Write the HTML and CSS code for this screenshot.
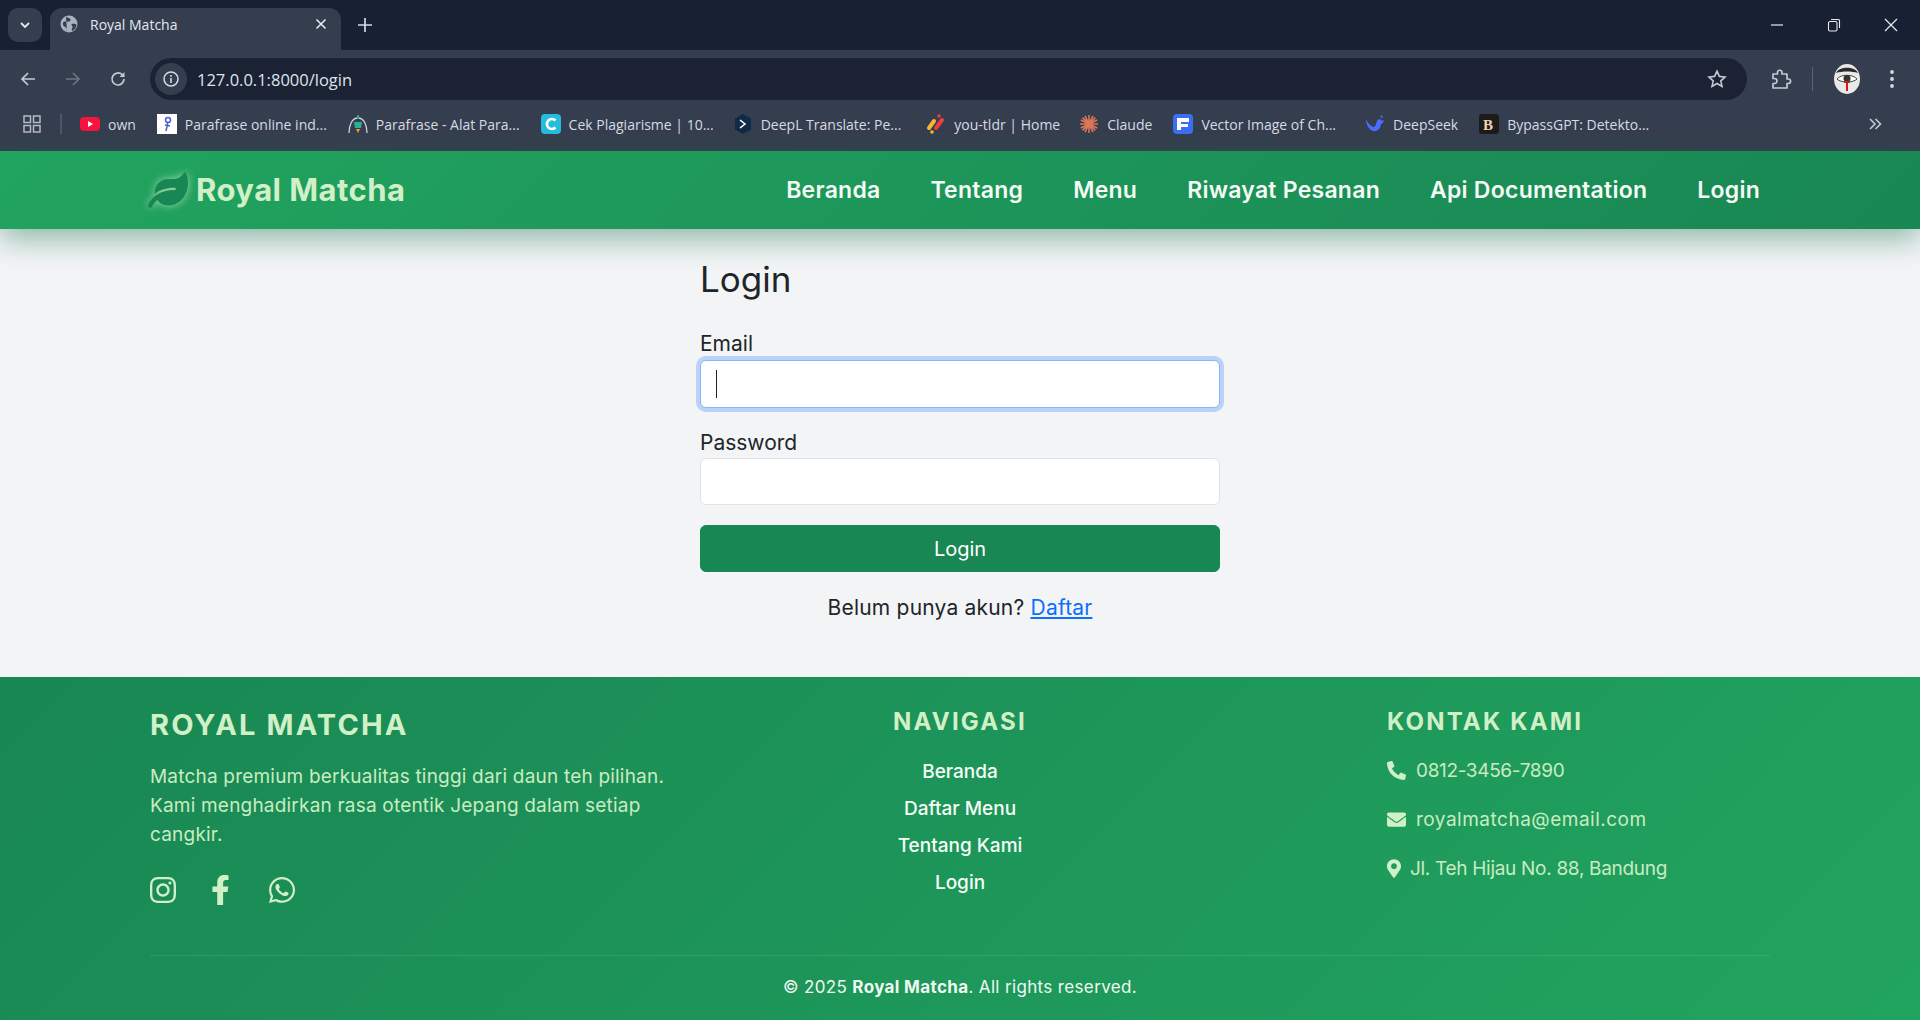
FILE: index.html
```html
<!DOCTYPE html>
<html lang="id">
<head>
  <meta charset="UTF-8">
  <title>Royal Matcha</title>
  <link rel="stylesheet" href="styles.css">
</head>
<body>
  <!-- browser chrome -->
  <div class="tabstrip">
    <div class="tab-menu">
      <svg width="14" height="14" viewBox="0 0 14 14"><path d="M3 5l4 4 4-4" fill="none" stroke="#e3e8ef" stroke-width="1.8"/></svg>
    </div>
    <div class="tab">
      <svg width="18" height="18" viewBox="0 0 18 18"><circle cx="9" cy="9" r="8.5" fill="#aab2bf"/><path d="M6 1.5c1.5 2 4 1 4.5 3S8 7 6 6.5 2.500 7 3 9.500s3 2 3.500 4 0 3 .5 3.500M12 9c2-.5 4 0 4.500 1-.5 3-2 5-4.500 6-1-2 1-3 .5-4.500S10.500 9.500 12 9z" fill="#353e4e"/></svg>
      <span class="tab-title">Royal Matcha</span>
      <svg class="tab-close" width="12" height="12" viewBox="0 0 12 12"><path d="M1.5 1.5l9 9M10.5 1.5l-9 9" stroke="#e3e8ef" stroke-width="1.6"/></svg>
    </div>
    <svg class="new-tab" width="14" height="14" viewBox="0 0 14 14"><path d="M7 0v14M0 7h14" stroke="#d5dbe5" stroke-width="1.7"/></svg>
    <div class="win-controls">
      <svg width="14" height="14" viewBox="0 0 14 14"><path d="M1 7h12" stroke="#e8ebf0" stroke-width="1.2"/></svg>
      <svg width="14" height="14" viewBox="0 0 14 14"><rect x="1.5" y="3.5" width="8.5" height="9.5" rx="1.5" fill="none" stroke="#e8ebf0" stroke-width="1.1"/><path d="M4 1.5h7.5a1 1 0 0 1 1 1V10" fill="none" stroke="#e8ebf0" stroke-width="1.1"/></svg>
      <svg width="14" height="14" viewBox="0 0 14 14"><path d="M1 1l12 12M13 1L1 13" stroke="#e8ebf0" stroke-width="1.2"/></svg>
    </div>
  </div>

  <div class="toolbar">
    <div class="tool-btns">
      <svg width="18" height="18" viewBox="0 0 18 18"><path d="M16 9H3M9 3L3 9l6 6" fill="none" stroke="#c3cad5" stroke-width="1.7"/></svg>
      <svg width="18" height="18" viewBox="0 0 18 18"><path d="M2 9h13M9 3l6 6-6 6" fill="none" stroke="#6d7582" stroke-width="1.7"/></svg>
      <svg width="18" height="18" viewBox="0 0 18 18"><path d="M15 9a6 6 0 1 1-1.800-4.300L15 6.500" fill="none" stroke="#c3cad5" stroke-width="1.7"/><path d="M15.500 2v5h-5z" fill="#c3cad5"/></svg>
    </div>
    <div class="omnibox">
      <span class="site-info">
        <svg width="18" height="18" viewBox="0 0 18 18"><circle cx="9" cy="9" r="7" fill="none" stroke="#d5dbe5" stroke-width="1.5"/><path d="M9 8v5M9 5v1.700" stroke="#d5dbe5" stroke-width="1.6"/></svg>
      </span>
      <span class="url">127.0.0.1:8000/login</span>
      <svg class="star" width="20" height="20" viewBox="0 0 20 20"><path d="M10 2.200l2.400 5.200 5.600.6-4.200 3.800 1.200 5.600-5-2.900-5 2.900 1.200-5.600L2 8l5.600-.6z" fill="none" stroke="#c3cad5" stroke-width="1.6"/></svg>
    </div>
    <div class="tool-right">
      <svg width="22" height="22" viewBox="0 0 22 22"><path d="M3 6h4.500V4.500a2.200 2.200 0 0 1 4.500 0V6h5v5h1.300a2.200 2.200 0 0 1 0 4.500H17V20H3v-4.500h1.500a2.500 2.500 0 0 0 0-5H3z" fill="none" stroke="#c3cad5" stroke-width="1.7" stroke-linejoin="round"/></svg>
      <span class="tool-sep"></span>
      <svg class="avatar" width="26" height="30" viewBox="0 0 26 30"><ellipse cx="13" cy="15" rx="13" ry="15" fill="#e9e9e9"/><path d="M2 9C5 2 21 2 24 9c-6-2-16-2-22 0z" fill="#2a2a2a"/><path d="M3 15c4-5 16-5 20 0-4 4-16 4-20 0z" fill="#fff" stroke="#444"/><circle cx="13" cy="14.500" r="3.500" fill="#333"/><path d="M13 17v10" stroke="#d81818" stroke-width="2"/><path d="M10 18.500h6" stroke="#d81818"/></svg>
      <svg class="dots" width="6" height="20" viewBox="0 0 6 20"><circle cx="3" cy="3" r="1.900" fill="#d5dbe5"/><circle cx="3" cy="10" r="1.900" fill="#d5dbe5"/><circle cx="3" cy="17" r="1.900" fill="#d5dbe5"/></svg>
    </div>
  </div>

  <div class="bookmarks">
    <svg class="apps" width="18" height="18" viewBox="0 0 18 18"><g fill="none" stroke="#b4bbc6" stroke-width="1.5"><rect x="1" y="1" width="6.5" height="6.5"/><rect x="10.5" y="1" width="6.5" height="6.5"/><rect x="1" y="10.5" width="6.5" height="6.5"/><rect x="10.5" y="10.5" width="6.5" height="6.5"/></g></svg>
    <span class="bm-sep"></span>
    <a class="bm bm-own"><svg width="20" height="20" viewBox="0 0 20 20"><rect y="3" width="20" height="14" rx="4" fill="#f4143e"/><path d="M8 7l5 3-5 3z" fill="#fff"/></svg>own</a>
    <a class="bm bm-a"><svg width="20" height="20" viewBox="0 0 20 20"><rect width="20" height="20" fill="#fff"/><circle cx="11" cy="6" r="2.5" fill="none" stroke="#4c5fd0" stroke-width="1.5"/><path d="M11 8l-2 9M8 11l5 1" stroke="#4c5fd0" stroke-width="1.5"/></svg>Parafrase online ind...</a>
    <a class="bm bm-b"><svg width="20" height="20" viewBox="0 0 20 20"><path d="M1 19C1 11 4 4 10 4s9 7 9 15" fill="none" stroke="#cfd5dd" stroke-width="1.3"/><path d="M10 1v4" stroke="#2fae97" stroke-width="2"/><path d="M6 8h8l-1 6H7z" fill="#2fae97"/><path d="M8 15h4l-2 4z" fill="#e2a14a"/></svg>Parafrase - Alat Para...</a>
    <a class="bm bm-c"><svg width="20" height="20" viewBox="0 0 20 20"><rect width="20" height="20" rx="4" fill="#26bcdc"/><path d="M14.500 6.500a5 5 0 1 0 0 7" fill="none" stroke="#fff" stroke-width="2.6"/></svg>Cek Plagiarisme | 10...</a>
    <a class="bm bm-d"><svg width="20" height="20" viewBox="0 0 20 20"><path d="M10 0l8 4.500v11L10 20l-8-4.500v-11z" fill="#0f2b46"/><path d="M7 6l5 4-5 4" fill="none" stroke="#fff" stroke-width="1.6"/></svg>DeepL Translate: Pe...</a>
    <a class="bm bm-e"><svg width="20" height="20" viewBox="0 0 20 20"><path d="M3 14l5-7" stroke="#f5b82e" stroke-width="4" stroke-linecap="round"/><path d="M10 14l6-8" stroke="#ee3d3d" stroke-width="4" stroke-linecap="round"/><circle cx="13" cy="2" r="1.800" fill="#ee3d3d"/><circle cx="6" cy="18" r="1.800" fill="#f5b82e"/></svg>you-tldr | Home</a>
    <a class="bm bm-f"><svg width="20" height="20" viewBox="0 0 20 20"><g stroke="#d97757" stroke-width="1.6"><path d="M10 1v18M1 10h18M3.600 3.600l12.800 12.800M16.400 3.600L3.600 16.400M6 1.800l8 16.400M14 1.800L6 18.200M1.800 6l16.400 8M18.200 6L1.800 14"/></g></svg>Claude</a>
    <a class="bm bm-g"><svg width="20" height="20" viewBox="0 0 20 20"><rect width="20" height="20" rx="4" fill="#3a70f0"/><path d="M4 4h12v4H8v2h7v3H8v3H4z" fill="#fff"/></svg>Vector Image of Ch...</a>
    <a class="bm bm-h"><svg width="20" height="20" viewBox="0 0 20 20"><path d="M1 5c0 8 5 13 10 12 3-1 5-4 5-7 1 0 3-2 3-4-1 1-2 1-3 0-1-1-3-1-4 1s-1 5-3 6C6 13 3 9 1 5z" fill="#4d6bfe"/><path d="M15 3l2-2 1 3z" fill="#4d6bfe"/></svg>DeepSeek</a>
    <a class="bm bm-i"><svg width="20" height="20" viewBox="0 0 20 20"><rect width="20" height="20" rx="3" fill="#1c1c1c"/><text x="4" y="16" font-size="15" font-weight="700" font-family="Liberation Serif" fill="#f0d3b0">B</text></svg>BypassGPT: Detekto...</a>
    <svg class="bm-more" width="14" height="14" viewBox="0 0 14 14"><path d="M2 2l5 5-5 5M7.500 2l5 5-5 5" fill="none" stroke="#c3cad5" stroke-width="1.6"/></svg>
  </div>

  <!-- page -->
  <nav class="navbar">
    <a class="brand">
      <svg class="brand-leaf" width="40" height="36" viewBox="0 0 576 512"><path d="M546.2 9.7c-5.600-12.500-21.600-13-28.300-1.200C486.900 62.400 431.400 96 368 96h-80C182 96 96 182 96 288c0 7 .8 13.700 1.500 20.500C161.300 262.800 253.400 224 384 224c8.800 0 16 7.200 16 16s-7.200 16-16 16C132.600 256 26 410.100 2.400 468c-6.600 16.300 1.200 34.900 17.500 41.600 16.400 6.800 35-1.100 41.800-17.300 1.500-3.500 20.900-47.900 71.900-90.600 32.400 43.900 94 85.800 174.900 77.200C465.500 467.500 576 326.700 576 154.300c0-50.200-10.800-102.200-29.800-144.600z" fill="#198754"/></svg>
      <span class="brand-name">Royal Matcha</span>
    </a>
    <div class="nav-links">
      <a>Beranda</a>
      <a>Tentang</a>
      <a>Menu</a>
      <a>Riwayat Pesanan</a>
      <a>Api Documentation</a>
      <a>Login</a>
    </div>
  </nav>

  <main class="content">
    <form class="login-box">
      <h2>Login</h2>
      <label class="first-label">Email</label>
      <div class="field focused"><span class="caret"></span></div>
      <label>Password</label>
      <div class="field"></div>
      <button type="button" class="btn-login">Login</button>
      <p class="register">Belum punya akun? <a>Daftar</a></p>
    </form>
  </main>

  <footer class="footer">
    <div class="footer-cols">
      <div class="col-about">
        <h3>ROYAL MATCHA</h3>
        <p>Matcha premium berkualitas tinggi dari daun teh pilihan. Kami menghadirkan rasa otentik Jepang dalam setiap cangkir.</p>
        <div class="socials">
          <svg width="26" height="30" viewBox="0 0 448 512"><path d="M224.100 141c-63.600 0-114.900 51.300-114.900 114.900s51.300 114.900 114.900 114.900S339 319.500 339 255.900 287.700 141 224.100 141zm0 189.600c-41.100 0-74.700-33.500-74.700-74.700s33.500-74.700 74.700-74.700 74.700 33.500 74.700 74.700-33.600 74.700-74.700 74.700zm146.400-194.300c0 14.900-12 26.800-26.800 26.800-14.900 0-26.800-12-26.800-26.800s12-26.800 26.800-26.800 26.800 12 26.800 26.800zm76.100 27.200c-1.700-35.900-9.900-67.700-36.200-93.900-26.200-26.200-58-34.400-93.900-36.200-37-2.100-147.900-2.100-184.900 0-35.800 1.700-67.600 9.900-93.900 36.100s-34.400 58-36.200 93.900c-2.100 37-2.100 147.900 0 184.900 1.700 35.900 9.900 67.700 36.200 93.900s58 34.400 93.900 36.200c37 2.100 147.900 2.100 184.900 0 35.900-1.700 67.700-9.900 93.900-36.200 26.200-26.200 34.400-58 36.200-93.900 2.100-37 2.100-147.800 0-184.800zM398.800 388c-7.800 19.600-22.900 34.700-42.600 42.600-29.500 11.700-99.500 9-132.100 9s-102.700 2.600-132.100-9c-19.600-7.800-34.700-22.900-42.600-42.600-11.700-29.500-9-99.500-9-132.100s-2.600-102.700 9-132.100c7.800-19.600 22.900-34.700 42.600-42.600 29.500-11.700 99.500-9 132.100-9s102.700-2.600 132.100 9c19.600 7.800 34.700 22.900 42.600 42.600 11.700 29.500 9 99.500 9 132.100s2.700 102.700-9 132.100z" fill="#d1f0c8"/></svg>
          <svg width="19" height="30" viewBox="0 0 320 512"><path d="M279.140 288l14.220-92.660h-88.910v-60.130c0-25.350 12.420-50.060 52.240-50.060h40.420V6.260S260.430 0 225.360 0c-73.220 0-121.080 44.380-121.080 124.720v70.620H22.890V288h81.390v224h100.170V288z" fill="#d1f0c8"/></svg>
          <svg class="icon-wa" width="26" height="30" viewBox="0 0 448 512"><path d="M380.900 97.100C339 55.100 283.200 32 223.900 32c-122.400 0-222 99.600-222 222 0 39.100 10.200 77.300 29.600 111L0 480l117.700-30.900c32.400 17.700 68.900 27 106.100 27h.1c122.300 0 224.100-99.600 224.100-222 0-59.300-25.200-115-67.100-157zm-157 341.600c-33.200 0-65.700-8.900-94-25.700l-6.700-4-69.800 18.300L72 359.200l-4.400-7c-18.500-29.400-28.200-63.300-28.200-98.200 0-101.700 82.800-184.500 184.600-184.500 49.300 0 95.600 19.200 130.400 54.100 34.800 34.900 56.200 81.200 56.100 130.500 0 101.800-84.900 184.600-186.600 184.600zm101.200-138.200c-5.500-2.800-32.800-16.200-37.900-18-5.100-1.900-8.800-2.800-12.500 2.800-3.700 5.600-14.300 18-17.600 21.800-3.200 3.700-6.500 4.200-12 1.400-32.600-16.300-54-29.100-75.500-66-5.700-9.800 5.700-9.100 16.300-30.300 1.800-3.700.9-6.900-.5-9.700-1.400-2.800-12.500-30.100-17.100-41.200-4.500-10.800-9.100-9.300-12.500-9.500-3.200-.2-6.900-.2-10.600-.2-3.700 0-9.700 1.400-14.800 6.900-5.100 5.600-19.400 19-19.400 46.300 0 27.300 19.900 53.700 22.600 57.400 2.800 3.700 39.100 59.700 94.800 83.800 35.200 15.200 49 16.500 66.600 13.900 10.700-1.600 32.800-13.400 37.400-26.400 4.600-13 4.600-24.100 3.200-26.400-1.300-2.500-5-3.900-10.500-6.600z" fill="#d1f0c8"/></svg>
        </div>
      </div>
      <div class="col-nav">
        <h4>NAVIGASI</h4>
        <a>Beranda</a>
        <a>Daftar Menu</a>
        <a>Tentang Kami</a>
        <a>Login</a>
      </div>
      <div class="col-contact">
        <h4>KONTAK KAMI</h4>
        <div class="contact-row row-phone">
          <svg width="19" height="19" viewBox="0 0 512 512"><path d="M497.390 361.800l-112-48a24 24 0 0 0-28 6.900l-49.600 60.600A370.660 370.660 0 0 1 130.600 204.110l60.600-49.600a23.940 23.940 0 0 0 6.900-28l-48-112A24.160 24.160 0 0 0 122.600.61l-104 24A24 24 0 0 0 0 48c0 256.500 207.900 464 464 464a24 24 0 0 0 23.400-18.600l24-104a24.290 24.290 0 0 0-14.010-27.600z" fill="#d1f0c8"/></svg>
          <span>0812-3456-7890</span>
        </div>
        <div class="contact-row row-mail">
          <svg width="19" height="19" viewBox="0 0 512 512"><path d="M502.300 190.800c3.900-3.100 9.700-.2 9.700 4.700V400c0 26.500-21.500 48-48 48H48c-26.500 0-48-21.500-48-48V195.600c0-5 5.700-7.800 9.700-4.700 22.400 17.400 52.100 39.500 154.100 113.600 21.100 15.400 56.700 47.800 92.200 47.600 35.700.3 72-32.800 92.300-47.600 102-74.100 131.600-96.300 154-113.700zM256 320c23.200.4 56.600-29.200 73.400-41.400 132.700-96.300 142.800-104.700 173.400-128.700 5.800-4.500 9.200-11.500 9.200-18.900v-19c0-26.500-21.500-48-48-48H48C21.500 64 0 85.500 0 112v19c0 7.400 3.400 14.300 9.200 18.900 30.600 23.900 40.700 32.400 173.400 128.700 16.800 12.200 50.200 41.800 73.400 41.400z" fill="#d1f0c8"/></svg>
          <span>royalmatcha@email.com</span>
        </div>
        <div class="contact-row row-map">
          <svg width="14" height="19" viewBox="0 0 384 512"><path d="M172.268 501.670C26.970 291.031 0 269.413 0 192 0 85.961 85.961 0 192 0s192 85.961 192 192c0 77.413-26.970 99.031-172.268 309.670-9.535 13.774-29.930 13.773-39.464 0zM192 272c44.183 0 80-35.817 80-80s-35.817-80-80-80-80 35.817-80 80 35.817 80 80 80z" fill="#d1f0c8"/></svg>
          <span>Jl. Teh Hijau No. 88, Bandung</span>
        </div>
      </div>
    </div>
    <div class="copyright">&copy; 2025 <strong>Royal Matcha</strong>. All rights reserved.</div>
  </footer>
</body>
</html>
```

FILE: styles.css
```css
* { box-sizing: border-box; }
html, body { height: 100%; }
body {
  margin: 0;
  display: flex;
  flex-direction: column;
  height: 1020px;
  overflow: hidden;
  background-color: #f3f4f6;
  font-family: 'Inter', 'Liberation Sans', sans-serif;
  color: #212529;
}

/* browser chrome */
.tabstrip {
  height: 50px;
  flex: none;
  background: #182133;
  display: flex;
  align-items: flex-end;
  padding-left: 8px;
  font-family: 'Open Sans', sans-serif;
}
.tab-menu {
  width: 34px; height: 34px; margin-bottom: 8px;
  background: #353e4e; border-radius: 10px;
  display: flex; align-items: center; justify-content: center;
}
.tab {
  width: 291px; height: 42px; margin-left: 8px;
  background: #353e4e; border-radius: 12px 12px 0 0;
  display: flex; align-items: center;
  padding: 0 14px 10px 10px;
  color: #e3e8ef; font-size: 14px;
}
.tab-title { margin-left: 12px; flex: 1; }
.new-tab { margin: 0 0 18px 17px; }
.win-controls {
  margin-left: auto;
  align-self: flex-start;
  padding-top: 18px;
  display: flex;
  gap: 43px;
  padding-right: 22px;
}
.toolbar {
  height: 50px;
  flex: none;
  background: #353e4e;
  display: flex;
  align-items: center;
  padding: 0 18px 0 19px;
  font-family: 'Open Sans', sans-serif;
}
.tool-btns { display: flex; gap: 27px; width: 131px; margin-top: 8px; }
.omnibox {
  width: 1597px; height: 42px; margin-top: 8px;
  background: #1a2233; border-radius: 21px;
  display: flex; align-items: center;
  padding: 0 20px 0 5px;
  color: #dfe5ee; font-size: 16.5px;
}
.site-info {
  width: 32px; height: 32px; border-radius: 50%;
  background: #353e4e;
  display: flex; align-items: center; justify-content: center;
}
.url { margin-left: 10px; flex: 1; }
.tool-right { display: flex; align-items: center; margin-left: 23px; margin-top: 8px; }
.avatar { margin-left: 21px; }
.dots { margin-left: 29px; }
.tool-sep { width: 1px; height: 24px; background: #5a6373; margin-left: 20px; }
.bookmarks {
  height: 51px;
  flex: none;
  background: #353e4e;
  display: flex;
  align-items: center;
  padding-left: 23px;
  padding-bottom: 3px;
  font-family: 'Open Sans', sans-serif;
  font-size: 14px;
  color: #d5dbe5;
}
.bm-sep { width: 2px; height: 20px; background: #4d5665; margin: 0 18px 0 19px; }
.bm { display: flex; align-items: center; gap: 8px; white-space: nowrap; margin-right: 21px; }
.bm svg { flex: none; }
.bm-c { margin-right: 19px; }
.bm-d { margin-right: 25px; }
.bm-e { margin-right: 19px; }
.bm-g { margin-right: 29px; }
.bm-more { margin-left: auto; margin-right: 38px; }

/* page nav */
.navbar {
  height: 78px;
  flex: none;
  padding: 0 160px 0 148px;
  display: flex;
  align-items: center;
  justify-content: space-between;
  background: linear-gradient(135deg, #21a45f, #198754);
  box-shadow: 0 10px 30px rgba(20, 110, 70, 0.45);
  position: relative;
  z-index: 2;
}
.brand {
  display: flex; align-items: center; gap: 8px;
  font-size: 31px; font-weight: 700; letter-spacing: 0.45px; color: #d1f0c8;
}
.brand-name { margin-top: -2px; }
.brand-leaf { filter: drop-shadow(0 0 4px rgba(209, 240, 200, 0.7)); }
.nav-links { display: flex; gap: 50px; }
.nav-links a { color: #f3fbf4; font-size: 23px; font-weight: 600; letter-spacing: 0.25px; }

/* login form */
.content {
  flex: 1;
  display: flex;
  justify-content: center;
}
.login-box { width: 520px; padding-top: 27px; font-size: 21px; }
.login-box h2 { margin: 0 0 29px; font-size: 35px; font-weight: 400; line-height: 46px; }
.login-box label { display: block; line-height: 26px; height: 28px; }
.login-box .first-label { height: 29px; }
.field {
  height: 47px;
  background: #fff;
  border: 1px solid #dee2e6;
  border-radius: 6px;
  margin-bottom: 24px;
  display: flex;
  align-items: center;
  padding-left: 15px;
}
.field.focused {
  height: 48px;
  margin-bottom: 22px;
  border-color: #86b7fe;
  box-shadow: 0 0 0 4px rgba(13, 110, 253, 0.25);
}
.caret { width: 1px; height: 28px; background: #212529; }
.btn-login {
  display: block;
  width: 100%; height: 47px;
  margin-top: -4px;
  background: #198754; color: #fff;
  border: 1px solid #198754; border-radius: 6px;
  font: inherit; font-size: 20px;
}
.register { margin: 21px 0 0; text-align: center; line-height: 30px; letter-spacing: 0.2px; }
.register a { color: #0d6efd; text-decoration: underline; }

/* footer */
.footer {
  height: 343px;
  flex: none;
  background: linear-gradient(135deg, #198754, #21a45f);
  padding: 31px 150px 0;
  display: flex;
  flex-direction: column;
}
.footer-cols {
  display: grid;
  grid-template-columns: 1fr 1fr 1fr;
  height: 248px;
  border-bottom: 1px solid rgba(255, 255, 255, 0.1);
}
.col-about h3 {
  margin: 0 0 20px; font-size: 29px; font-weight: 700; line-height: 34px;
  letter-spacing: 2.1px; color: #d1f0c8;
}
.col-about p { margin: 0 0 26px; width: 530px; font-size: 19px; line-height: 29px; letter-spacing: 0.2px; color: #c9ecc2; }
.socials { display: flex; align-items: center; gap: 35px; }
.icon-wa { margin-left: 4px; }
.col-nav { display: flex; flex-direction: column; align-items: center; }
.col-nav h4, .col-contact h4 {
  margin: 0 0 17px; font-size: 24px; font-weight: 700; line-height: 28px;
  letter-spacing: 2.2px; color: #d1f0c8;
}
.col-nav a { color: #f6fdf7; font-size: 19px; font-weight: 500; line-height: 37px; }
.col-contact { padding-left: 157px; }
.contact-row {
  display: flex; align-items: center; gap: 10px;
  height: 49px; margin-top: -7px; margin-bottom: 7px;
  font-size: 19px; color: #c9ecc2;
}
.row-phone { letter-spacing: -0.35px; }
.row-mail { letter-spacing: 0.5px; }
.row-map { gap: 9px; letter-spacing: -0.3px; }
.copyright {
  text-align: center;
  margin-top: 21px;
  font-size: 17px;
  letter-spacing: 0.35px;
  color: #eefaf0;
}
```
